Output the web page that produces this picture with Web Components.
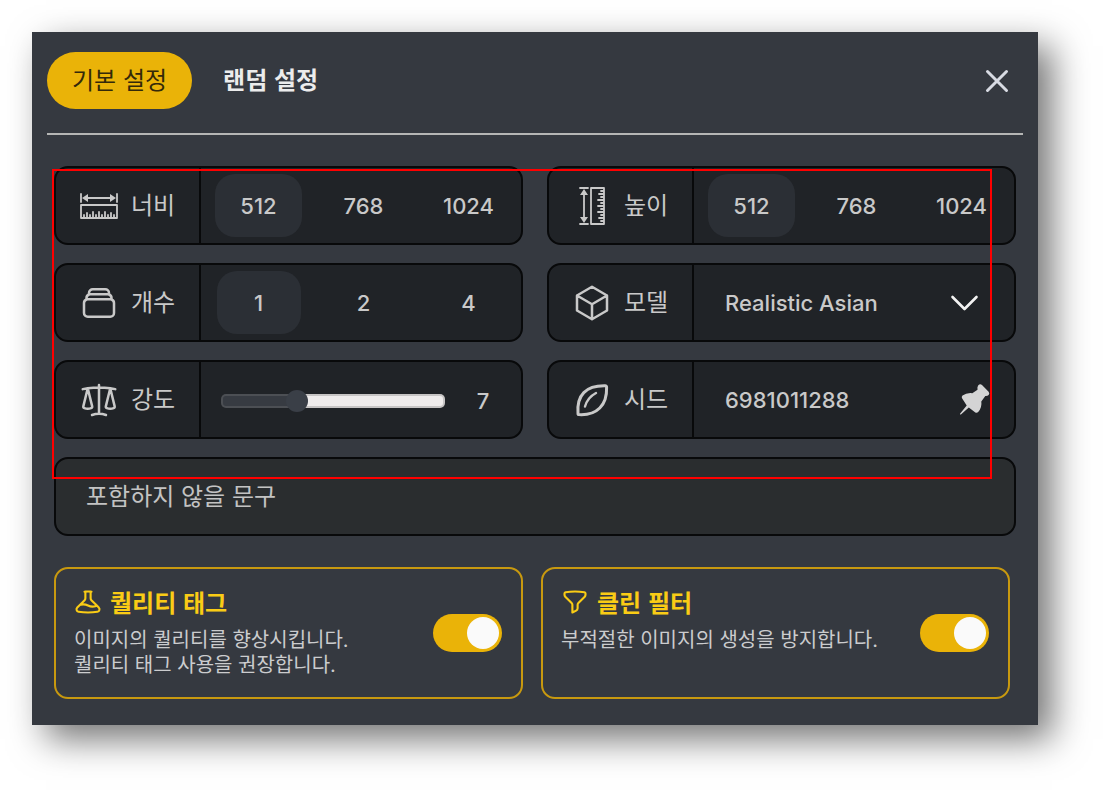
<!DOCTYPE html>
<html lang="ko">
<head>
<meta charset="utf-8">
<meta name="viewport" content="width=device-width, initial-scale=1">
<title>이미지 설정</title>
<style>
  body {
    margin: 0;
    padding: 32px 65px 65px 32px;
    background: #fff;
    font-family: "Noto Sans CJK KR", sans-serif;
    --panel: #353940;
    --card: #202327;
    --pill: #2b2f35;
    --line: #08090a;
    --text: #c9c9c9;
    --gold: #eab308;
    --latin: Inter, "Noto Sans CJK KR", sans-serif;
  }
</style>
</head>
<body>
<settings-panel>
  <tab-button slot="tabs" selected>기본 설정</tab-button>
  <tab-button slot="tabs">랜덤 설정</tab-button>

  <option-field label="너비" icon="width" values="512,768,1024"></option-field>
  <option-field label="높이" icon="height" values="512,768,1024"></option-field>
  <option-field label="개수" icon="stack" values="1,2,4"></option-field>
  <select-field label="모델" icon="cube" value="Realistic Asian"></select-field>
  <range-field label="강도" icon="scale" value="7"></range-field>
  <seed-field label="시드" icon="leaf" value="6981011288"></seed-field>
  <exclude-field hint="포함하지 않을 문구"></exclude-field>

  <toggle-card slot="toggles" icon="beaker" heading="퀄리티 태그">이미지의 퀄리티를 향상시킵니다.<br>퀄리티 태그 사용을 권장합니다.</toggle-card>
  <toggle-card slot="toggles" icon="funnel" heading="클린 필터">부적절한 이미지의 생성을 방지합니다.</toggle-card>
</settings-panel>

<script>
const ruler = `<path stroke-width="1.8" d="M2 8v8M38 8v8M6 12h28M2 19h36v13H2zM5 32v-3M8 32v-5M11 32v-3M14 32v-6M17 32v-3M20 32v-6M23 32v-3M26 32v-6M29 32v-3M32 32v-5M35 32v-3"/><path fill="currentColor" stroke="none" d="M3 12l6-4v8zM37 12l-6-4v8z"/>`;
const icons = {
  width: [40, ruler],
  height: [40, `<g transform="rotate(-90 20 20)">${ruler}</g>`],
  stack: [24, `<path d="M6 6.878V6a2.25 2.25 0 0 1 2.25-2.25h7.5A2.25 2.25 0 0 1 18 6v.878m-12 0c.235-.083.487-.128.75-.128h10.5c.263 0 .515.045.75.128m-12 0A2.25 2.25 0 0 0 4.5 9v.878m13.5-3A2.25 2.25 0 0 1 19.5 9v.878m0 0a2.246 2.246 0 0 0-.75-.128H5.25c-.263 0-.515.045-.75.128m15 0A2.25 2.25 0 0 1 21 12v6a2.25 2.25 0 0 1-2.25 2.25H5.25A2.25 2.25 0 0 1 3 18v-6c0-.98.626-1.813 1.5-2.122"/>`],
  cube: [24, `<path d="m21 7.5-9-5.25L3 7.5m18 0-9 5.25m9-5.25v9l-9 5.25M3 7.5l9 5.25M3 7.5v9l9 5.25m0-9v9"/>`],
  scale: [24, `<path d="M12 3v17.25m0 0c-1.472 0-2.882.265-4.185.75M12 20.25c1.472 0 2.882.265 4.185.75M18.75 4.97A48.416 48.416 0 0 0 12 4.5c-2.291 0-4.545.16-6.75.47m13.5 0c1.01.143 2.01.317 3 .52m-3-.52 2.62 10.726c.122.499-.106 1.028-.589 1.202a5.988 5.988 0 0 1-2.031.352 5.988 5.988 0 0 1-2.031-.352c-.483-.174-.711-.703-.59-1.202L18.75 4.971Zm-16.5.52c.99-.203 1.99-.377 3-.52m0 0 2.62 10.726c.122.499-.106 1.028-.589 1.202a5.989 5.989 0 0 1-2.031.352 5.989 5.989 0 0 1-2.031-.352c-.483-.174-.711-.703-.59-1.202L5.25 4.971Z"/>`],
  leaf: [40, `<path stroke-width="3" d="M7 34.600Q6 34.600 6 33.500C4.500 15 14 5.500 33 5.800Q34.600 5.900 34.600 7.500C35.200 25 25 35.600 7 34.600Z"/><path stroke-width="2.4" d="M13 26.500Q15.500 17.500 24 13"/>`],
  beaker: [24, `<path stroke-width="1.8" d="M9.75 3.104v5.714a2.25 2.25 0 0 1-.659 1.591L5 14.5M9.75 3.104c-.251.023-.501.05-.75.082m.75-.082a24.301 24.301 0 0 1 4.5 0m0 0v5.714c0 .597.237 1.17.659 1.591L19.8 15.3M14.25 3.104c.251.023.501.05.75.082M19.8 15.3l-1.57.393A9.065 9.065 0 0 1 12 15a9.065 9.065 0 0 0-6.23-.693L5 14.5m14.8.8 1.402 1.402c1.232 1.232.65 3.318-1.067 3.611A48.309 48.309 0 0 1 12 21c-2.773 0-5.491-.235-8.135-.687-1.718-.293-2.3-2.379-1.067-3.61L5 14.5"/>`],
  funnel: [24, `<path stroke-width="1.8" d="M12 3c2.755 0 5.455.232 8.083.678.533.09.917.556.917 1.096v1.044a2.25 2.25 0 0 1-.659 1.591l-5.432 5.432a2.25 2.25 0 0 0-.659 1.591v2.927a2.25 2.25 0 0 1-1.244 2.013L9.75 21v-6.568a2.25 2.25 0 0 0-.659-1.591L3.659 7.409A2.25 2.25 0 0 1 3 5.818V4.774c0-.54.384-1.006.917-1.096A48.32 48.32 0 0 1 12 3Z"/>`],
  close: [40, `<path stroke-width="3" d="M10.500 10.500l19 19M29.500 10.500l-19 19"/>`],
  chevron: [40, `<path stroke-width="2.6" d="M8.500 14l12 12 12-12"/>`],
  pin: [32, `<path fill="currentColor" stroke="none" d="M20.300 1.200Q22.200 -.7 24 1.100L30.600 7.700Q32 9.500 30.600 11Q29.600 12.200 27.300 12L23.300 17.600Q24.200 23.500 20.200 28Q18.700 29.300 17 28.200L10.800 23.600L3.200 30.200Q1.400 31.200 2.200 29.400L8.700 21.500L4.200 14.600Q3 12.900 4.500 11.600Q8.500 8.600 14.300 9.200L19.500 5.700Q19 2.700 20.300 1.200Z"/>`]
};
const esc = s => s.replace(/&/g, "&amp;").replace(/</g, "&lt;").replace(/"/g, "&quot;");

class IconGlyph extends HTMLElement {
  connectedCallback() {
    const [box, art] = icons[this.getAttribute("name")];
    this.attachShadow({ mode: "open" }).innerHTML = `
      <style>
        :host { display: block; flex: none; width: 40px; height: 40px; }
        svg { display: block; width: 100%; height: 100%; overflow: visible; }
      </style>
      <svg viewBox="0 0 ${box} ${box}" fill="none" stroke="currentColor" stroke-width="1.5" stroke-linecap="round" stroke-linejoin="round" aria-hidden="true">${art}</svg>`;
  }
}
customElements.define("icon-glyph", IconGlyph);

class TabButton extends HTMLElement {
  connectedCallback() {
    this.attachShadow({ mode: "open" }).innerHTML = `
      <style>
        :host { display: block; }
        button {
          padding: 10px 25px 14px; border: 0; border-radius: 32px; background: none;
          color: #ececec; font: 700 24px/33px "Noto Sans CJK KR", sans-serif; cursor: pointer;
        }
        :host([selected]) button { background: var(--gold); color: #33290a; font-weight: 400; }
      </style>
      <button type="button"><slot></slot></button>`;
  }
}
customElements.define("tab-button", TabButton);

/* Shared frame: icon and caption on the left, the control on the right. */
class FieldBase extends HTMLElement {
  connectedCallback() {
    const label = esc(this.getAttribute("label"));
    const tag = this.group ? "div" : "label";
    const link = this.group ? 'id="caption"' : 'for="control"';
    this.attachShadow({ mode: "open" }).innerHTML = `
      <style>
        :host {
          display: flex; box-sizing: border-box; min-width: 0; height: 79px;
          border: 2px solid var(--line); border-radius: 14px;
          background: var(--card); color: var(--text);
        }
        .caption {
          flex: none; box-sizing: border-box; width: 145px; padding-left: 23px;
          display: flex; align-items: center; gap: 12px;
          border-right: 2px solid var(--line); font-size: 24px; line-height: 36px;
        }
        .caption span { padding-bottom: 4px; }
        .body {
          flex: 1; min-width: 0; display: flex; align-items: center;
          font: 500 22px/28px var(--latin);
        }
        input, select { font: inherit; color: inherit; margin: 0; }
        ${this.css()}
      </style>
      <${tag} class="caption" ${link}><icon-glyph name="${this.getAttribute("icon")}"></icon-glyph><span>${label}</span></${tag}>
      <div class="body" ${this.group ? 'role="radiogroup" aria-labelledby="caption"' : ""}>${this.control()}</div>`;
  }
}

customElements.define("option-field", class extends FieldBase {
  get group() { return true; }
  css() { return `
    .body { padding-left: 5px; display: grid; grid-template-columns: repeat(3, minmax(0, 1fr)); justify-items: center; }
    .choice { position: relative; }
    .choice input { position: absolute; inset: 0; width: 100%; height: 100%; opacity: 0; cursor: pointer; }
    .choice label { display: block; box-sizing: border-box; min-width: 84px; padding: 18px 25px 17px; border-radius: 20px; text-align: center; }
    .choice input:checked + label { background: var(--pill); }`; }
  control() {
    return this.getAttribute("values").split(",").map((v, i) =>
      `<div class="choice"><input type="radio" name="choice" id="c${i}" value="${v}" ${i ? "" : "checked"}><label for="c${i}">${v}</label></div>`).join("");
  }
});

customElements.define("select-field", class extends FieldBase {
  css() { return `
    .body { display: grid; align-items: stretch; }
    select, icon-glyph.arrow { grid-area: 1 / 1; }
    select { appearance: none; width: 100%; padding: 0 70px 0 31px; border: 0; border-radius: 0 12px 12px 0; background: none; }
    .arrow { align-self: center; justify-self: end; margin-right: 30px; color: #f2f2f2; pointer-events: none; }`; }
  control() {
    return `<select id="control"><option>${esc(this.getAttribute("value"))}</option></select><icon-glyph class="arrow" name="chevron"></icon-glyph>`;
  }
});

customElements.define("range-field", class extends FieldBase {
  css() { return `
    .body { padding: 2px 20px 0; }
    input {
      appearance: none; flex: 1; min-width: 0; height: 14px; box-sizing: border-box;
      border: 2px solid #77777755; border-radius: 5px;
      background: linear-gradient(to right, #373b42 34%, #efecec 34%) border-box;
    }
    input::-webkit-slider-thumb { appearance: none; width: 22px; height: 22px; border-radius: 50%; background: #3a3f47; }
    output { width: 76px; text-align: center; margin-right: -20px; }`; }
  control() {
    const v = this.getAttribute("value");
    return `<input id="control" type="range" min="1" max="20" value="${v}"><output for="control">${v}</output>`;
  }
});

customElements.define("seed-field", class extends FieldBase {
  css() { return `
    input { flex: 1; min-width: 0; padding: 0 0 0 31px; border: 0; background: none; outline: 0; }
    button { flex: none; display: block; margin-right: 24px; padding: 0; border: 0; background: none; color: #d4d4d4; cursor: pointer; }
    button icon-glyph { width: 32px; height: 32px; }`; }
  control() {
    return `<input id="control" type="text" inputmode="numeric" value="${esc(this.getAttribute("value"))}"><button type="button" aria-label="시드 고정"><icon-glyph name="pin"></icon-glyph></button>`;
  }
});

customElements.define("exclude-field", class extends HTMLElement {
  connectedCallback() {
    const hint = esc(this.getAttribute("hint"));
    this.attachShadow({ mode: "open" }).innerHTML = `
      <style>
        :host { display: block; grid-column: 1 / -1; }
        textarea {
          display: block; box-sizing: border-box; width: 100%; height: 79px; margin: 0;
          padding: 18px 30px; border: 2px solid var(--line); border-radius: 14px; resize: none;
          background: #2a2d2f; color: var(--text); outline: 0; overflow: hidden;
          font: 400 24px/36px "Noto Sans CJK KR", sans-serif;
        }
        textarea::placeholder { color: #c3c3c3; opacity: 1; }
      </style>
      <textarea rows="1" aria-label="${hint}" placeholder="${hint}"></textarea>`;
  }
});

customElements.define("toggle-card", class extends HTMLElement {
  connectedCallback() {
    this.attachShadow({ mode: "open" }).innerHTML = `
      <style>
        :host {
          display: flex; align-items: center; box-sizing: border-box; min-width: 0; min-height: 132px;
          padding: 17px 19px 17px 18px; border: 2px solid #c8990f; border-radius: 14px;
        }
        .copy { flex: 1; min-width: 0; align-self: stretch; }
        label { display: flex; align-items: center; gap: 8px; color: #facc15; font-weight: 700; font-size: 24px; line-height: 32px; }
        label icon-glyph { width: 28px; height: 28px; }
        p { margin: 10px 0 0; color: #cbccce; font: 400 20px/25px var(--latin); }
        input {
          appearance: none; flex: none; box-sizing: border-box; width: 69px; height: 38px; margin: 0; padding: 3px;
          display: flex; border-radius: 19px; background: #6b7280; cursor: pointer;
        }
        input::before { content: ""; width: 32px; height: 32px; border-radius: 50%; background: #fafafa; }
        input:checked { background: var(--gold); justify-content: flex-end; }
      </style>
      <div class="copy">
        <label for="switch"><icon-glyph name="${this.getAttribute("icon")}"></icon-glyph><span>${esc(this.getAttribute("heading"))}</span></label>
        <p><slot></slot></p>
      </div>
      <input id="switch" type="checkbox" role="switch" checked>`;
  }
});

customElements.define("settings-panel", class extends HTMLElement {
  connectedCallback() {
    this.attachShadow({ mode: "open" }).innerHTML = `
      <style>
        :host {
          display: block; padding: 20px 15px 26px; background: var(--panel);
          box-shadow: 14px 14px 34px rgba(0, 0, 0, .55);
        }
        header { display: flex; align-items: center; padding-bottom: 24px; border-bottom: 2px solid #b5b6b5; }
        nav { flex: 1; display: flex; gap: 6px; }
        .close { margin-right: 6px; padding: 0; border: 0; background: none; color: #d8dbe3; cursor: pointer; }
        .fields {
          position: relative; display: grid; grid-template-columns: repeat(2, minmax(0, 1fr));
          gap: 18px 24px; margin: 31px 7px 0;
        }
        .toggles { display: grid; grid-template-columns: repeat(2, minmax(0, 1fr)); gap: 18px; margin: 31px 13px 0 7px; }
        .marker { position: absolute; inset: 3px 24px 57px -2px; border: 2px solid #f00; pointer-events: none; }
      </style>
      <header>
        <nav><slot name="tabs"></slot></nav>
        <button class="close" type="button" aria-label="닫기"><icon-glyph name="close"></icon-glyph></button>
      </header>
      <div class="fields"><slot></slot><div class="marker"></div></div>
      <div class="toggles"><slot name="toggles"></slot></div>`;
  }
});
</script>
</body>
</html>
